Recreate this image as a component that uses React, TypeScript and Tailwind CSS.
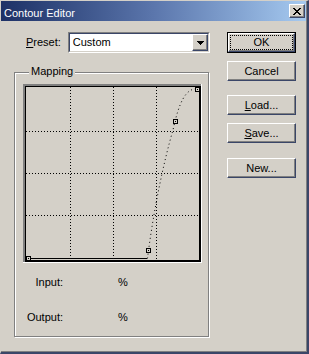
import React from "react";

const raised =
  "border border-t-white border-l-white border-r-[#3a4668] border-b-[#3a4668] shadow-[inset_-1px_-1px_0_#808080]";

function Btn({
  label,
  u,
  mt,
  isDefault,
}: {
  label: string;
  u?: boolean;
  mt: string;
  isDefault?: boolean;
}) {
  const text = u ? (
    <>
      <span className="underline underline-offset-[1px]">{label[0]}</span>
      {label.slice(1)}
    </>
  ) : (
    label
  );
  if (isDefault) {
    return (
      <div className={`${mt} h-[21px] w-[69px] border border-black`}>
        <div className={`h-full w-full ${raised} p-[1px]`}>
          <div className="flex h-full w-full items-center justify-center border border-dotted border-black leading-[13px]">
            {text}
          </div>
        </div>
      </div>
    );
  }
  return (
    <div
      className={`${mt} flex h-[20px] w-[69px] items-center justify-center ${raised} leading-[13px]`}
    >
      {text}
    </div>
  );
}

function CloseGlyph() {
  const rows = [
    "XX....XX",
    ".XX..XX.",
    "..XXXX..",
    "...XX...",
    "..XXXX..",
    ".XX..XX.",
    "XX....XX",
  ];
  return (
    <svg width="8" height="7" shapeRendering="crispEdges">
      {rows.map((r, y) =>
        r.split("").map((c, x) =>
          c === "X" ? <rect key={`${x}-${y}`} x={x} y={y} width="1" height="1" fill="#000" /> : null,
        ),
      )}
    </svg>
  );
}

function Graph() {
  const gx = [47.5, 90.5, 133.5];
  const gy = [47.5, 89.5, 131.5];
  const pts = [
    [3.5, 172.5],
    [123.5, 164.5],
    [150.5, 35.5],
    [172.5, 3.5],
  ];
  return (
    <svg width="179" height="179" shapeRendering="crispEdges">
      {/* sunken frame */}
      <rect x="0" y="0" width="179" height="2" fill="#808080" />
      <rect x="0" y="0" width="2" height="179" fill="#808080" />
      <rect x="0" y="178" width="179" height="1" fill="#fff" />
      <rect x="178" y="0" width="1" height="179" fill="#fff" />
      <rect x="2" y="2" width="176" height="1" fill="#000" />
      <rect x="2" y="2" width="1" height="176" fill="#000" />
      <rect x="2" y="176" width="176" height="2" fill="#000" />
      <rect x="176" y="2" width="2" height="176" fill="#000" />
      {gx.map((x) => (
        <line key={x} x1={x} y1="3" x2={x} y2="176" stroke="#000" strokeDasharray="1 2" />
      ))}
      {gy.map((y) => (
        <line key={y} x1="3" y1={y} x2="176" y2={y} stroke="#000" strokeDasharray="1 2" />
      ))}
      <line x1="4" y1="174.5" x2="124" y2="174.5" stroke="#000" />
      <path
        d="M124.5 174.5 C 130 130, 140 80, 150 46 C 156 18, 163 4, 174 5"
        fill="none"
        stroke="#000"
        strokeDasharray="1 3"
        shapeRendering="auto"
      />
      {pts.map(([x, y]) => (
        <g key={`${x}-${y}`}>
          <rect x={x} y={y} width="4" height="4" fill="#d4d0c8" stroke="#000" />
          <rect x={x + 1.5} y={y + 1.5} width="1" height="1" fill="#000" />
        </g>
      ))}
    </svg>
  );
}

export default function App() {
  return (
    <div className="h-[354px] w-[309px] font-['Liberation_Sans',Arial,sans-serif] text-[11px] text-black select-none">
      <div className="flex h-full w-full flex-col border-t border-l border-t-[#d4d0c8] border-l-[#d4d0c8] border-r-2 border-b-2 border-r-[#3a4668] border-b-[#3a4668]">
        <div className="flex h-full w-full flex-col border-r border-b border-r-[#808080] border-b-[#808080] bg-[#d4d0c8]">
          {/* title bar */}
          <div className="flex h-[20px] shrink-0 justify-between bg-gradient-to-r from-[#1e3166] via-[#5b76ac] to-[#a6caf0]">
            <div className="pl-[3px] pt-[6px] leading-[13px] text-white">Contour Editor</div>
            <div className={`mt-[3px] mr-[1px] flex h-[14px] w-[16px] items-center justify-center bg-[#d4d0c8] ${raised}`}>
              <CloseGlyph />
            </div>
          </div>

          {/* body */}
          <div className="flex flex-1">
            <div className="ml-[13px] w-[196px] pt-[11px]">
              <div className="flex h-[21px] items-center">
                <div className="w-[54px] pl-[12px] leading-[13px]">
                  <span className="underline underline-offset-[1px]">P</span>reset:
                </div>
                <div className="h-[21px] w-[143px] border border-t-[#808080] border-l-[#808080] border-r-white border-b-white">
                  <div className="flex h-full w-full border border-t-[#3a4668] border-l-[#3a4668] border-r-[#d4d0c8] border-b-[#d4d0c8] bg-white">
                    <div className="flex flex-1 items-center pl-[3px] leading-[13px]">Custom</div>
                    <div className={`flex h-[17px] w-[16px] items-center justify-center bg-[#d4d0c8] ${raised}`}>
                      <svg width="7" height="4" shapeRendering="crispEdges">
                        <polygon points="0,0 7,0 3.5,4" fill="#000" />
                      </svg>
                    </div>
                  </div>
                </div>
              </div>

              {/* Mapping group */}
              <div className="relative mt-[19px] h-[265px] w-[195px] border border-[#808080] shadow-[inset_1px_1px_0_#fff,1px_1px_0_#fff]">
                <div className="absolute left-[14px] top-[-8px] bg-[#d4d0c8] px-[2px] leading-[13px]">Mapping</div>
                <div className="ml-[8px] mt-[11px] h-[179px] w-[179px]">
                  <Graph />
                </div>
                <div className="mt-[13px] flex leading-[13px]">
                  <div className="w-[48px] text-right">Input:</div>
                  <div className="ml-[55px]">%</div>
                </div>
                <div className="mt-[22px] flex leading-[13px]">
                  <div className="w-[48px] text-right">Output:</div>
                  <div className="ml-[55px]">%</div>
                </div>
              </div>
            </div>

            <div className="ml-[17px] w-[69px] pt-[11px]">
              <Btn label="OK" mt="mt-0" isDefault />
              <Btn label="Cancel" mt="mt-[8px]" />
              <Btn label="Load..." u mt="mt-[14px]" />
              <Btn label="Save..." u mt="mt-[8px]" />
              <Btn label="New..." mt="mt-[15px]" />
            </div>
          </div>
        </div>
      </div>
    </div>
  );
}
